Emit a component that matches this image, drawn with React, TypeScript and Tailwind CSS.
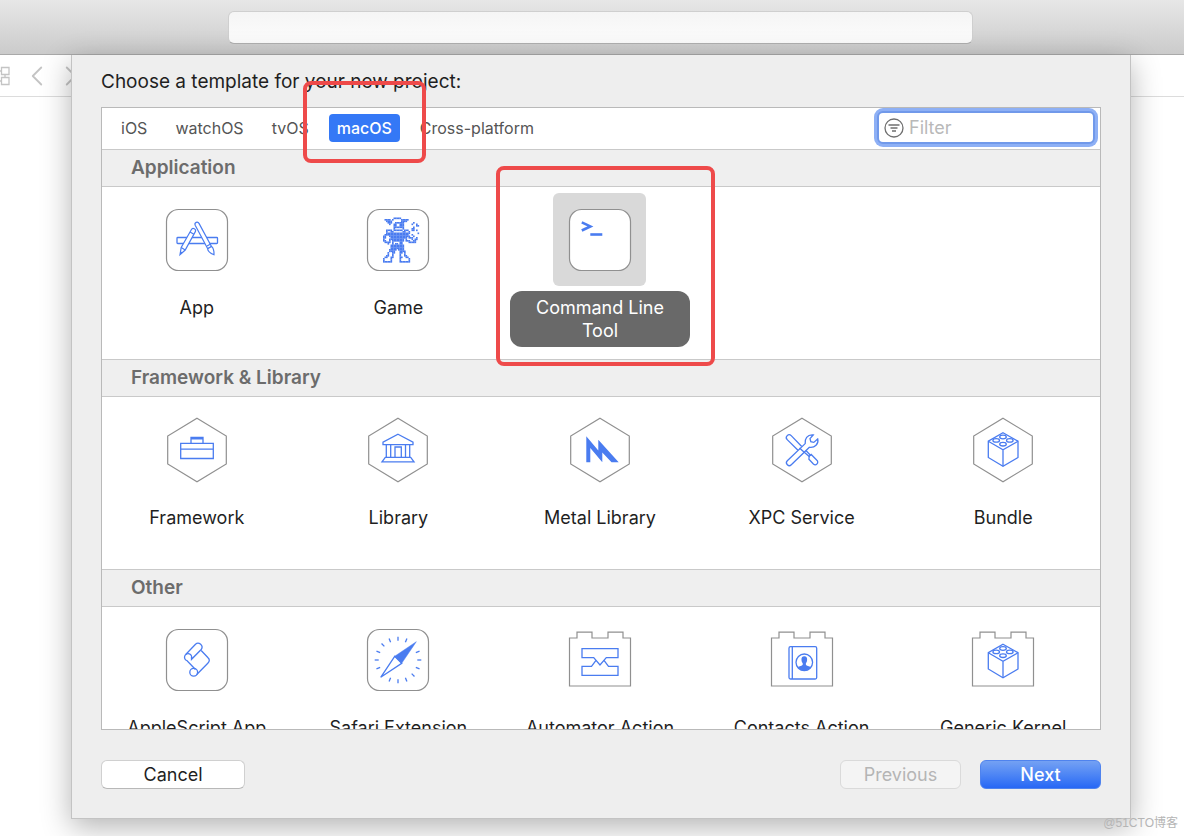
import type { ReactNode } from "react";
import clsx from "clsx";
import { ChevronLeft, ChevronRight } from "lucide-react";

const BLUE = "#4a7cf0";

const platforms = ["iOS", "watchOS", "tvOS", "macOS", "Cross-platform"];

// One character per sprite pixel
const sprite = [
  ".......XXXXX............",
  ".XXXX.X.....XXXXX.......",
  "..XXXX......XXXX........",
  "...XXX..XXXXXX......X...",
  "....X..XX..XXX.....X..X.",
  ".......XX..XXX........XX",
  ".......XXXXXXX......X...",
  ".......X.....X.....XX...",
  "..XXXX.XXXXXX.XXX..XX.X.",
  "..X..XX......XX..X......",
  "..XXXXXXXXXXXXXXXX.....X",
  ".XXXXXXXXXXXXXXXX..X....",
  "XX..XXXXXXXXXXXXXX..X...",
  "XX...XXXXXXXXXXX.XXX..X.",
  "X...XXXXXXXXXX.X...X.XX.",
  "XX..X.XXXXXXXX.XXX..XX..",
  ".XXXX.X....XX....XXXXX..",
  "...X..X.XX.XX...........",
  ".....XXXXXXXXX..........",
  ".....XXXXXXXXX..........",
  ".....XXXXXXXXX..........",
  "....XXXXX.XXXX..........",
  "....XXXX...XXXX.........",
  "...X..XX...XX.X.........",
  "...X..X....X..X.........",
  "..XX..X....X..XX........",
  ".XX..XX....XX..XX.......",
  "X....X.....X.....X......",
  "X....X.....X.....X......",
  "XXXXXX.....XXXXXXX......",
];

const Tile = () => (
  <rect x="1.5" y="1.5" width="61" height="61" rx="12" fill="white" stroke="#909090" strokeWidth="1.2" />
);

const Hexagon = () => (
  <path d="M32 .3 61.3 18v28L32 63.7 2.7 46V18Z" fill="white" stroke="#909090" strokeWidth="1.2" />
);

const Brick = () => (
  <path
    d="M1.5 10H9V4.2h15V10h16V4.2h15V10h7.5v48h-61Z"
    fill="white"
    stroke="#909090"
    strokeWidth="1.2"
  />
);

const Cube = () => (
  <>
    <path d="M32 14.7 47 23.2v16.3L32 48.2l-14.7-8.7V23.2Z" />
    <path d="m17.3 23.2 14.7 8.5 15-8.5M32 31.7v16.5" />
    <ellipse cx="32" cy="19" rx="3.3" ry="1.8" />
    <ellipse cx="25.2" cy="22.4" rx="3.3" ry="1.8" />
    <ellipse cx="38.8" cy="22.4" rx="3.3" ry="1.8" />
    <ellipse cx="32" cy="26.2" rx="3.3" ry="1.8" />
  </>
);

const Icon = ({ shape, children }: { shape: ReactNode; children: ReactNode }) => (
  <svg width="64" height="64" viewBox="0 0 64 64" className="overflow-visible" aria-hidden="true">
    {shape}
    <g fill="none" stroke={BLUE} strokeWidth="1.3">
      {children}
    </g>
  </svg>
);

const icons: Record<string, ReactNode> = {
  App: (
    <Icon shape={<Tile />}>
      <rect x="12" y="29.5" width="40.5" height="6" rx=".8" />
      <g fill="white" strokeWidth="1.2">
        <path d="M30.2 17.2a2.1 2.1 0 0 1 3.8-1.8L46.5 38.5l-3.8 2.2Z" />
        <path d="M42.7 40.7l3.8-2.2c1.8 1.2 2.6 3.6 2.5 8.2-4-1.6-6.2-3.5-6.3-6Z" />
        <path d="m42 37.9 3.6-2" />
        <path d="M26.3 21.7a2.2 2.2 0 0 1 3.9 2.2L20.2 42 15 46.7l1.2-7.2Z" />
        <path d="m25 24 3.9 2.2M16.2 39.5l4 2.5M15.5 44l1.7 1" />
      </g>
    </Icon>
  ),
  Game: (
    <Icon shape={<Tile />}>
      <g fill={BLUE} stroke="none" transform="translate(17 9.5) scale(1.5)">
        {sprite.map((row, y) =>
          [...row].map((c, x) => (c === "X" ? <rect key={`${x}-${y}`} x={x} y={y} width="1.1" height="1.1" /> : null))
        )}
      </g>
    </Icon>
  ),
  "Command Line Tool": (
    <Icon shape={<Tile />}>
      <path d="m13.8 14.3 8.6 4.1-8.6 4.1" strokeWidth="2.6" />
      <path d="M22.3 26.5h12" strokeWidth="2.6" />
    </Icon>
  ),
  Framework: (
    <Icon shape={<Hexagon />}>
      <path d="M15.7 25.3h32.6v15.2H15.7ZM15.7 31.2h32.6M26 25v-5.5h12V25" />
      <path d="M26 20.3h12" strokeWidth="2.4" />
    </Icon>
  ),
  Library: (
    <Icon shape={<Hexagon />}>
      <path d="m32 16.2 15 8v2.4H17v-2.4ZM20.3 26.6v12.8M24.7 26.6v12.8M39.5 26.6v12.8M43.7 26.6v12.8M29 39.4V29h6.3v10.4" />
      <path d="M19.3 39.4h25.4l3.3 4.4H16Z" />
    </Icon>
  ),
  "Metal Library": (
    <Icon shape={<Hexagon />}>
      <path
        fill={BLUE}
        stroke="none"
        d="M18.3 18.2 30.3 32.5V21.8L50.7 44.2h-7.2l-9.2-9.7V44.2L22.3 30v14.2h-4Z"
      />
    </Icon>
  ),
  "XPC Service": (
    <Icon shape={<Hexagon />}>
      <path d="M31.7 28.5 21.2 17.6a2.7 2.7 0 0 0-4 4L28 32.3" />
      <path d="m31 31.5 8.5 7.3M33.5 30l7.2 7.5" />
      <path d="m39.2 38.3 2-1.8 5.7 5.7a2.5 2.5 0 0 1-3.5 3.8l-4.5-4.8Z" />
      <path
        fill="white"
        d="M17.3 42.8 35.2 25.6c-.6-4.3 1.8-9.2 8-8.6l-3.2 3.6.8 3 3 .8 3.9-3.4c1.3 4.800-3 9.200-8.300 8.300L21.300 46.700a2.700 2.700 0 0 1-4-3.900Z"
      />
      <path d="m29.5 30 5 4.5" />
    </Icon>
  ),
  Bundle: (
    <Icon shape={<Hexagon />}>
      <Cube />
    </Icon>
  ),
  "AppleScript App": (
    <Icon shape={<Tile />}>
      <path d="M20.7 26.5 30.5 16.2c3.3-2.9 8.5 1.5 5.7 5.3L26.5 31.3v-2.4" />
      <path d="M26.5 30.5a3.6 3.6 0 1 0-4.4 2.2l8.4 8.8" />
      <path d="M36.2 22.5 42.8 29.5q3 2.7 0 5.7L31.500 46.800" />
      <circle cx="28.7" cy="44.3" r="3.9" />
    </Icon>
  ),
  "Safari Extension": (
    <Icon shape={<Tile />}>
      {[0, 22.5, 67.5, 90, 112.5, 135, 157.5, 180, 202.5, 247.5, 270, 292.5, 315, 337.5].map((deg) => (
        <path key={deg} d="M32 8.7v4" transform={`rotate(${deg} 32 32)`} />
      ))}
      <path d="M28.7 28.3 14.7 49.3l21-14Z" />
      <path d="m28.7 28.3 21.6-14.6-14.6 21.6Z" fill={BLUE} strokeWidth=".5" />
    </Icon>
  ),
  "Automator Action": (
    <Icon shape={<Brick />}>
      <path d="M14 20.7h36v9H38.3L32 37l-6.3-7.3H14Z" />
      <path d="M28 32.3 23.5 38.3H14v9h36v-9h-9.5L36 32.3" />
    </Icon>
  ),
  "Contacts Action": (
    <Icon shape={<Brick />}>
      <rect x="19" y="18.7" width="27.7" height="32.3" rx="1.5" />
      <path d="M22.3 18.7V51" />
      <circle cx="34.3" cy="34.3" r="8.3" />
      <path
        fill={BLUE}
        stroke="none"
        d="M34.3 28.3c2.2 0 3 1.5 2.8 3.6-.1 1.8-.7 2.5-1.2 3.2v1.7c.5 1.2 3.3 1.2 5 2.3-3 4.7-10 4.7-13.2 0 1.7-1.1 4.5-1.1 5-2.3v-1.7c-.5-.7-1.1-1.4-1.2-3.2-.2-2.1.6-3.6 2.8-3.6Z"
      />
    </Icon>
  ),
  "Generic Kernel": (
    <Icon shape={<Brick />}>
      <g transform="translate(0 1.5)">
        <Cube />
      </g>
    </Icon>
  ),
};

const sections = [
  { title: "Application", items: ["App", "Game", "Command Line Tool"] },
  { title: "Framework & Library", items: ["Framework", "Library", "Metal Library", "XPC Service", "Bundle"] },
  {
    title: "Other",
    items: ["AppleScript App", "Safari Extension", "Automator Action", "Contacts Action", "Generic Kernel"],
  },
];

const Template = ({ name, selected }: { name: string; selected: boolean }) => (
  <button type="button" aria-pressed={selected} className="relative flex flex-col items-center gap-[5px]">
    <span className={clsx("flex size-[93px] items-center justify-center rounded-md", selected && "bg-[#d9d9d9]")}>
      {icons[name]}
    </span>
    <span
      className={clsx(
        "w-full rounded-xl px-3 py-[5px] text-[18px] leading-[23px]",
        selected ? "bg-[#696969] text-white" : "text-[#1f1f1f]"
      )}
    >
      {name}
    </span>
    {selected && (
      <span className="pointer-events-none absolute -top-[27px] -right-[25px] -bottom-[19px] -left-[14px] z-10 rounded-lg border-4 border-[#ee4a4a]" />
    )}
  </button>
);

const App = () => {
  return (
    <div className="relative flex h-screen flex-col overflow-hidden bg-white font-[Inter,'Liberation_Sans',sans-serif]">
      <header className="flex h-[55px] shrink-0 items-center border-b border-[#a9a9a9] bg-linear-to-b from-[#e7e7e7] to-[#cbcbcb] pr-[211px] pl-[228px]">
        <div className="h-[33px] flex-1 rounded-md border border-[#cfcfcf] border-b-[#b0b0b0] bg-linear-to-b from-[#f5f5f5] to-[#fcfcfc]" />
      </header>

      <div className="relative flex min-h-0 flex-1 flex-col pr-[53px] pb-[17px] pl-[71px]">
        {/* Editor bar behind the sheet */}
        <div className="absolute inset-x-0 top-0 flex h-[42px] items-center border-b border-[#dcdcdc] text-[#c4c4c4]">
          <svg width="10" height="20" viewBox="0 0 10 20" fill="none" stroke="currentColor" strokeWidth="1.3" aria-hidden="true">
            <path d="M1.5 1.5H9v7H1.5ZM1.5 11.5H9v7H1.5ZM5 8.5v3M0 5h1.5M0 15h1.5" />
          </svg>
          <ChevronLeft size={34} strokeWidth={1.3} className="ml-[10px]" />
          <ChevronRight size={34} strokeWidth={1.3} />
        </div>

        <main className="relative flex min-h-0 flex-1 flex-col border border-t-0 border-[#c3c3c3] bg-[#eeeeee] px-[29px] pt-[15px] pb-[29px] shadow-[0_8px_28px_rgba(0,0,0,0.3)]">
          <h1 className="text-[19px] leading-6 text-[#1f1f1f]">Choose a template for your new project:</h1>

          <div className="mt-[13px] flex min-h-0 flex-1 flex-col border border-[#b9b9b9] bg-white">
            <div className="flex h-[41px] shrink-0 items-center justify-between pr-[5px] pb-[2px] pl-[11px]">
              <nav className="flex gap-3">
                {platforms.map((platform) => (
                  <button
                    key={platform}
                    type="button"
                    className={clsx(
                      "relative rounded px-2 text-[16px] leading-7",
                      platform === "macOS" ? "bg-[#3478f6] font-medium text-white" : "text-[#555555]"
                    )}
                  >
                    {platform}
                    {platform === "macOS" && (
                      <span className="pointer-events-none absolute -inset-x-[26px] -top-[33px] -bottom-[21px] z-10 rounded-lg border-4 border-[#ee4a4a]" />
                    )}
                  </button>
                ))}
              </nav>
              <label className="flex h-[33px] w-[218px] items-center gap-[5px] rounded-md border-2 border-[#7199ea] bg-white px-[5px] ring-3 ring-[#8eb0f5]">
                <svg width="20" height="20" viewBox="0 0 20 20" fill="none" stroke="#6f6f6f" strokeWidth="1.3" aria-hidden="true">
                  <circle cx="10" cy="10" r="9" />
                  <path d="M4.5 7h11M6.5 10h7M8 13h4" />
                </svg>
                <input
                  type="text"
                  aria-label="Filter"
                  placeholder="Filter"
                  className="min-w-0 flex-1 bg-transparent text-[18px] leading-6 outline-none placeholder:text-[#b9b9b9]"
                />
              </label>
            </div>

            <div className="min-h-0 flex-1 overflow-hidden">
              {sections.map((section) => (
                <section key={section.title}>
                  <h2 className="h-[38px] border-y border-[#c9c9c9] bg-[#efefef] px-[29px] text-[19px] leading-9 font-semibold text-[#6c6c6c]">
                    {section.title}
                  </h2>
                  <div className="grid min-h-[172px] grid-cols-5 items-start gap-x-[22px] pt-[6px] pr-[7px] pl-[5px]">
                    {section.items.map((name) => (
                      <Template key={name} name={name} selected={name === "Command Line Tool"} />
                    ))}
                  </div>
                </section>
              ))}
            </div>
          </div>

          <footer className="mt-[30px] flex gap-[19px] text-[18px] leading-[27px]">
            <button
              type="button"
              className="mr-auto w-36 rounded-md border border-[#d0d0d0] border-b-[#b8b8b8] bg-white text-[#1f1f1f]"
            >
              Cancel
            </button>
            <button type="button" disabled className="w-[121px] rounded-md border border-[#dadada] bg-[#f4f4f4] text-[#b5b5b5]">
              Previous
            </button>
            <button
              type="button"
              className="w-[121px] rounded-md border border-[#4f83ee] bg-linear-to-b from-[#74a1f3] to-[#2767f5] font-medium text-white"
            >
              Next
            </button>
          </footer>
        </main>
      </div>

      <p className="absolute right-[6px] bottom-[5px] font-['Liberation_Sans','Noto_Sans_CJK_SC',sans-serif] text-[12px] leading-4 text-[#b5b5b5]">
        @51CTO博客
      </p>
    </div>
  );
};

export default App;
